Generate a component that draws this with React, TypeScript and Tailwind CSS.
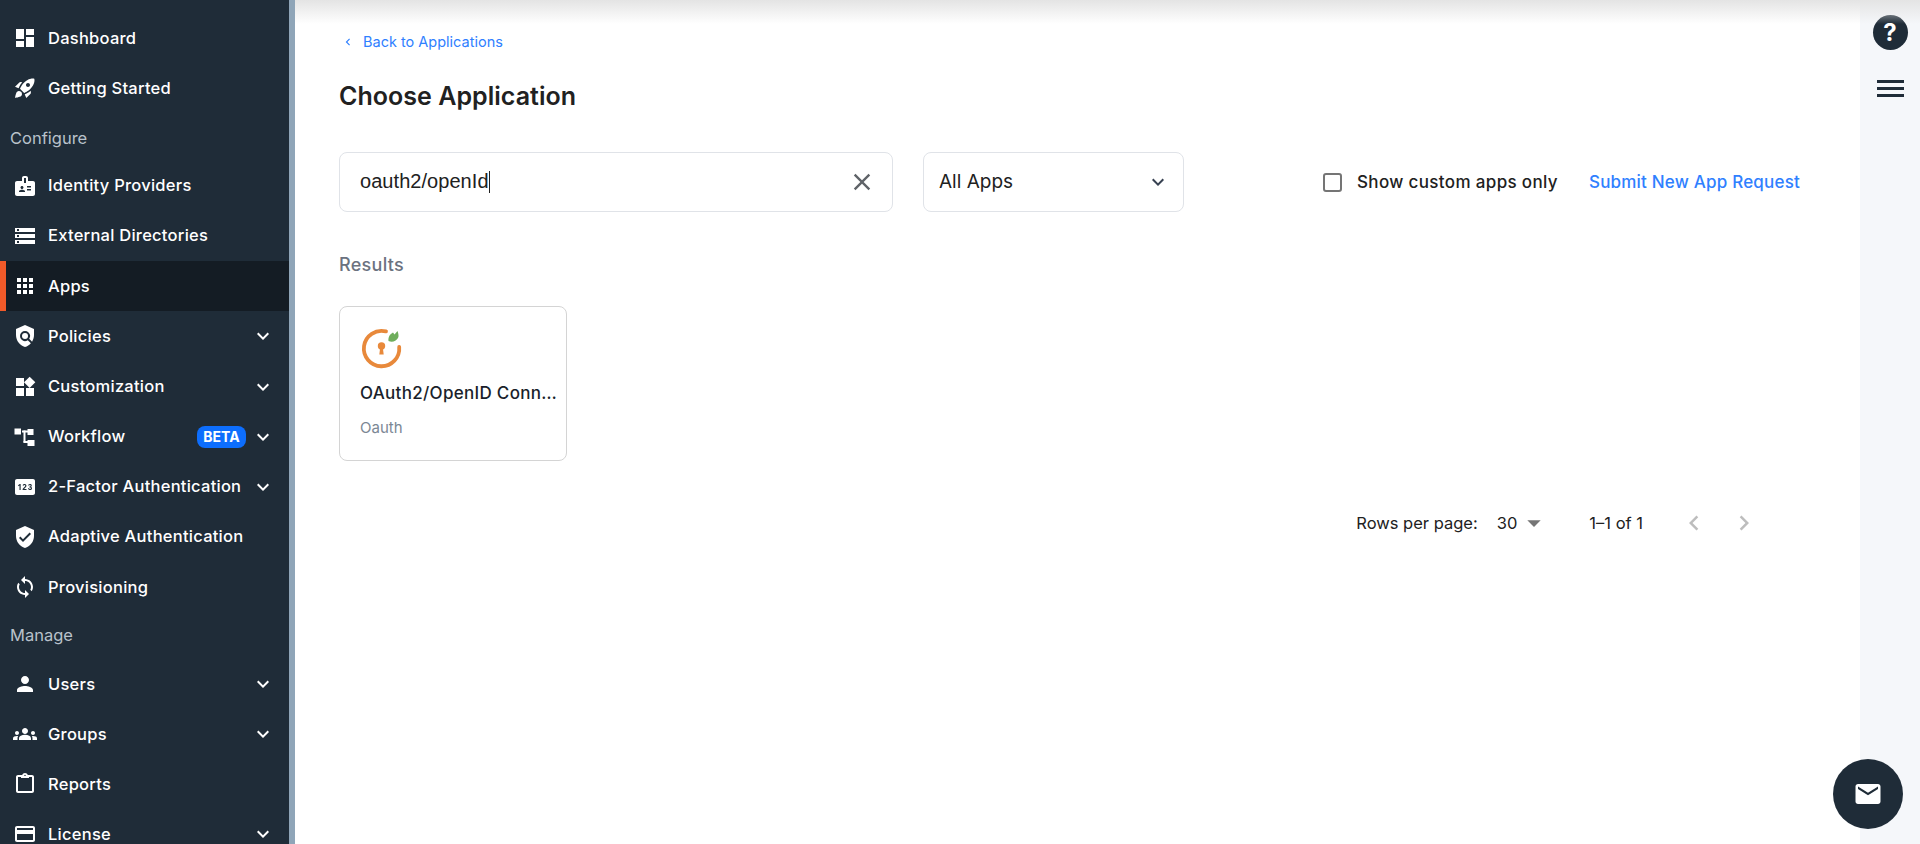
import { ReactNode } from "react";
import {
  MdDashboard,
  MdRocketLaunch,
  MdBadge,
  MdStorage,
  MdApps,
  MdPolicy,
  MdWidgets,
  MdPin,
  MdVerifiedUser,
  MdSync,
  MdPerson,
  MdGroups,
  MdOutlineCreditCard,
  MdExpandMore,
  MdClose,
  MdArrowDropDown,
  MdChevronLeft,
  MdChevronRight,
  MdMail,
} from "react-icons/md";

function WorkflowIcon() {
  return (
    <svg viewBox="0 0 24 24" className="w-6 h-6" fill="currentColor">
      <rect x="1.5" y="3.5" width="6.5" height="6" />
      <rect x="9" y="5.5" width="6" height="2" />
      <rect x="10.5" y="5.5" width="2" height="12" />
      <rect x="14.5" y="4" width="6" height="6" />
      <rect x="14.5" y="15" width="7" height="6" />
      <rect x="10.5" y="16" width="5" height="2" />
    </svg>
  );
}

function ReportsIcon() {
  return (
    <svg viewBox="0 0 24 24" className="w-6 h-6" fill="currentColor">
      <path d="M19 3h-4.180C14.400 1.840 13.300 1 12 1s-2.400.84-2.820 2H5c-1.100 0-2 .9-2 2v14c0 1.100.9 2 2 2h14c1.100 0 2-.9 2-2V5c0-1.100-.9-2-2-2zm-7-.25c.41 0 .75.34.75.75s-.34.75-.75.75-.75-.34-.75-.75.34-.75.75-.75zM19 19H5V5h14v14z" />
      <rect x="8" y="4" width="8" height="2" />
    </svg>
  );
}

function OauthLogo() {
  return (
    <svg viewBox="0 0 44 44" className="w-11 h-11">
      <path
        d="M26 4.400 A17.700 17.700 0 1 0 39.200 20"
        fill="none"
        stroke="#e8893b"
        strokeWidth="3.800"
        strokeLinecap="round"
      />
      <circle cx="21.500" cy="19" r="3.700" fill="#e8893b" />
      <path d="M20.300 20h2.400l1 7.500h-4.400z" fill="#e8893b" />
      <path d="M28.500 14C28 10 30 7 33 5.500L34.500 7.500L37.500 4C38.500 7 39 9 38 11C36 14.500 32 15.500 28.500 14z" fill="#6fae5c" />
    </svg>
  );
}

function NavItem({
  icon,
  label,
  more,
  active,
  badge,
}: {
  icon: ReactNode;
  label: string;
  more?: boolean;
  active?: boolean;
  badge?: boolean;
}) {
  return (
    <div
      className={
        active
          ? "h-[50.5px] flex items-center pr-[14px] pl-[7px] border-l-[6px] border-[#f15a29] bg-[#141c24]"
          : "h-[50.1px] flex items-center pr-[14px] pl-[13px]"
      }
    >
      <span className="w-6 h-6 mr-[11px] flex items-center justify-center text-[24px] shrink-0">
        {icon}
      </span>
      <span className="text-[16.5px] font-medium tracking-[0.25px] whitespace-nowrap">
        {label}
      </span>
      {badge && (
        <span className="ml-auto mr-[5px] w-[49px] h-[22px] rounded-[8px] bg-[#0d6efd] text-[14px] font-bold flex items-center justify-center">
          BETA
        </span>
      )}
      {more && (
        <MdExpandMore className={badge ? "text-[24px] shrink-0" : "ml-auto text-[24px] shrink-0"} />
      )}
    </div>
  );
}

function SectionLabel({ children, className }: { children: string; className: string }) {
  return (
    <div className={"flex items-center pl-[10px] text-[16.5px] text-[#b9c2cb] " + className}>
      {children}
    </div>
  );
}

export default function App() {
  return (
    <div className="relative flex h-[844px] overflow-hidden bg-white font-['Inter',sans-serif] text-[#212121]">
      {/* Sidebar */}
      <aside className="w-[295px] shrink-0 border-r-[6px] border-[#8fa5b8] bg-[#1f2c38] pt-[13px] text-white overflow-hidden">
        <NavItem icon={<MdDashboard />} label="Dashboard" />
        <NavItem icon={<MdRocketLaunch />} label="Getting Started" />
        <SectionLabel className="h-[47.5px] pt-[3px]">Configure</SectionLabel>
        <NavItem icon={<MdBadge />} label="Identity Providers" />
        <NavItem icon={<MdStorage />} label="External Directories" />
        <NavItem icon={<MdApps />} label="Apps" active />
        <NavItem icon={<MdPolicy />} label="Policies" more />
        <NavItem icon={<MdWidgets />} label="Customization" more />
        <NavItem icon={<WorkflowIcon />} label="Workflow" more badge />
        <NavItem icon={<MdPin />} label="2-Factor Authentication" more />
        <NavItem icon={<MdVerifiedUser />} label="Adaptive Authentication" />
        <NavItem icon={<MdSync />} label="Provisioning" />
        <SectionLabel className="h-[47px]">Manage</SectionLabel>
        <NavItem icon={<MdPerson />} label="Users" more />
        <NavItem icon={<MdGroups />} label="Groups" more />
        <NavItem icon={<ReportsIcon />} label="Reports" />
        <NavItem icon={<MdOutlineCreditCard />} label="License" more />
      </aside>

      {/* Main */}
      <main className="flex-1 min-w-0 pl-[44px] pr-[60px] pt-[32px]">
        <a className="flex items-center h-5 text-[14.5px] text-[#2f80ff]">
          <MdChevronLeft className="text-[14px] ml-[2px] mr-[8px]" />
          Back to Applications
        </a>
        <h1 className="mt-[28px] text-[25px] tracking-[0.03px] leading-[32px] font-semibold">Choose Application</h1>

        <div className="mt-[40px] flex items-center">
          <div className="w-[554px] h-[60px] flex items-center pl-[20px] pr-[16px] rounded-[8px] border border-[#e0e3e8]">
            <span className="font-['Liberation_Sans',sans-serif] text-[20px] tracking-[0.05px] pb-[2px]">oauth2/openId</span>
            <span className="w-px h-[22px] bg-[#212121]" />
            <MdClose className="ml-auto text-[28px] text-[#5f6368]" />
          </div>
          <div className="ml-[30px] w-[261px] h-[60px] flex items-center pl-[15px] pr-[13px] rounded-[8px] border border-[#e0e3e8]">
            <span className="text-[19px] pt-[1px]">All Apps</span>
            <MdExpandMore className="ml-auto text-[24px] text-[#374151]" />
          </div>
          <div className="ml-auto flex items-center pt-[1px]">
            <span className="w-[19px] h-[19px] rounded-[3px] border-2 border-[#757575]" />
            <span className="ml-[15px] text-[17px] tracking-[0.35px] font-medium">Show custom apps only</span>
            <a className="ml-[31px] text-[17px] tracking-[0.2px] font-medium text-[#2f80ff]">Submit New App Request</a>
          </div>
        </div>

        <div className="mt-[41px] text-[18px] tracking-[0.3px] font-medium text-[#6b7280] leading-[24px]">Results</div>

        {/* App card */}
        <div className="mt-[29px] w-[228px] h-[155px] rounded-[8px] border border-[#d4d4d4] pl-[20px] pr-[8px] pt-[20px]">
          <OauthLogo />
          <div className="mt-[11px] text-[17px] tracking-[0.3px] font-medium text-[#1a1f2b] truncate leading-[22px]">
            OAuth2/OpenID Connect
          </div>
          <div className="mt-[14px] text-[15px] text-[#7b8794] leading-[20px]">Oauth</div>
        </div>

        {/* Pagination */}
        <div className="mt-[50px] pr-[41px] flex items-center justify-end h-6 text-[16.5px]">
          <span>Rows per page:</span>
          <span className="ml-[19px]">30</span>
          <MdArrowDropDown className="ml-[1px] text-[32px] text-[#757575]" />
          <span className="ml-[39px]">1–1 of 1</span>
          <MdChevronLeft className="ml-[36px] text-[30px] text-[#bdbdbd]" />
          <MdChevronRight className="ml-[20px] text-[30px] text-[#bdbdbd]" />
        </div>
      </main>

      {/* Right rail */}
      <div className="w-[60px] shrink-0 bg-[#f5f7fa] flex flex-col items-center pt-[15px]">
        <span className="w-[35px] h-[35px] rounded-full bg-[#1f2c38] text-white flex items-center justify-center text-[24px] font-bold">
          ?
        </span>
        <span className="mt-[30px] flex flex-col gap-1 w-[27px]">
          <span className="h-[3px] bg-[#1f2c38]" />
          <span className="h-[3px] bg-[#1f2c38]" />
          <span className="h-[3px] bg-[#1f2c38]" />
        </span>
      </div>

      {/* Top shadow */}
      <div className="absolute top-0 left-[295px] right-0 h-[24px] bg-gradient-to-b from-[#e4e4e4] to-transparent" />

      {/* Mail button */}
      <button className="absolute right-[17px] bottom-[15px] w-[70px] h-[70px] rounded-full bg-[#1f2c38] text-white flex items-center justify-center">
        <MdMail className="text-[30px]" />
      </button>
    </div>
  );
}
